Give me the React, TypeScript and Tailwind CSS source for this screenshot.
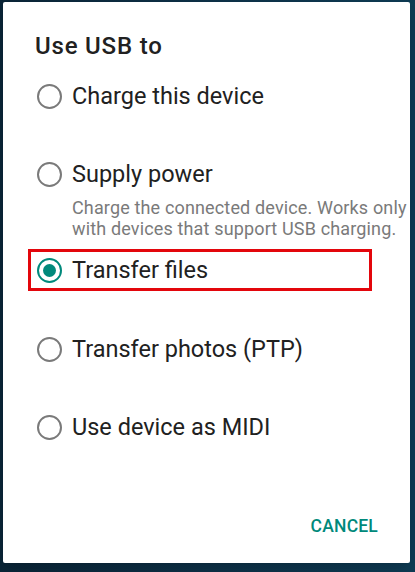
import { useState } from 'react';

type Option = { id: string; label: string; desc?: string };

const options: Option[] = [
  { id: 'charge', label: 'Charge this device' },
  { id: 'power', label: 'Supply power', desc: 'Charge the connected device. Works only with devices that support USB charging.' },
  { id: 'mtp', label: 'Transfer files' },
  { id: 'ptp', label: 'Transfer photos (PTP)' },
  { id: 'midi', label: 'Use device as MIDI' },
];

function Radio({ checked }: { checked: boolean }) {
  return (
    <span
      className={`flex h-[25px] w-[25px] shrink-0 items-center justify-center rounded-full border-[2.5px] ${
        checked ? 'border-[#00897b]' : 'border-[#7a7a7a]'
      }`}
    >
      {checked && <span className="h-[13px] w-[13px] rounded-full bg-[#00897b]" />}
    </span>
  );
}

export default function App() {
  const [selected, setSelected] = useState('mtp');

  const row = (o: Option) => (
    <button
      key={o.id}
      onClick={() => setSelected(o.id)}
      className="flex h-[30px] items-center gap-[10px] text-left"
    >
      <Radio checked={selected === o.id} />
      <span className="text-[23.5px] leading-[30px] text-[#212121]">{o.label}</span>
    </button>
  );

  return (
    <div
      className="h-[572px] w-[415px] overflow-hidden bg-gradient-to-r from-[#0a2436] via-[#0d3046] to-[#0e3a52] pt-[2px] pl-[3px]"
      style={{ fontFamily: 'Roboto, "Noto Sans", sans-serif' }}
    >
      <div className="flex h-[561px] w-[407px] flex-col rounded-[2px] bg-white shadow-lg">
        <h1 className="mt-[30px] pl-[32px] text-[24px] font-medium leading-[28px] tracking-[0.8px] text-[#212121]">
          Use USB to
        </h1>

        {/* Charge this device */}
        <div className="flex h-[72px] items-center pl-[34px]">{row(options[0])}</div>

        {/* Supply power */}
        <div className="mt-[27px] pl-[34px]">{row(options[1])}</div>
        <p className="mt-[8px] whitespace-nowrap pl-[69px] text-[18px] leading-[21px] tracking-[0.15px] text-[#7a7a7a]">
          Charge the connected device. Works only
          <br />
          with devices that support USB charging.
        </p>

        {/* Transfer files (highlighted) */}
        <div className="ml-[25px] mt-[10px] flex h-[42px] w-[344px] items-center border-[3px] border-[#e3060c] pl-[6px]">
          {row(options[2])}
        </div>

        <div className="mt-[43px] pl-[34px]">{row(options[3])}</div>
        <div className="mt-[48px] pl-[34px]">{row(options[4])}</div>

        <div className="mt-[74px] flex justify-end pr-[32px]">
          <button className="text-[17.5px] font-medium leading-[20px] tracking-[0.2px] text-[#00897b]">CANCEL</button>
        </div>
      </div>
    </div>
  );
}
